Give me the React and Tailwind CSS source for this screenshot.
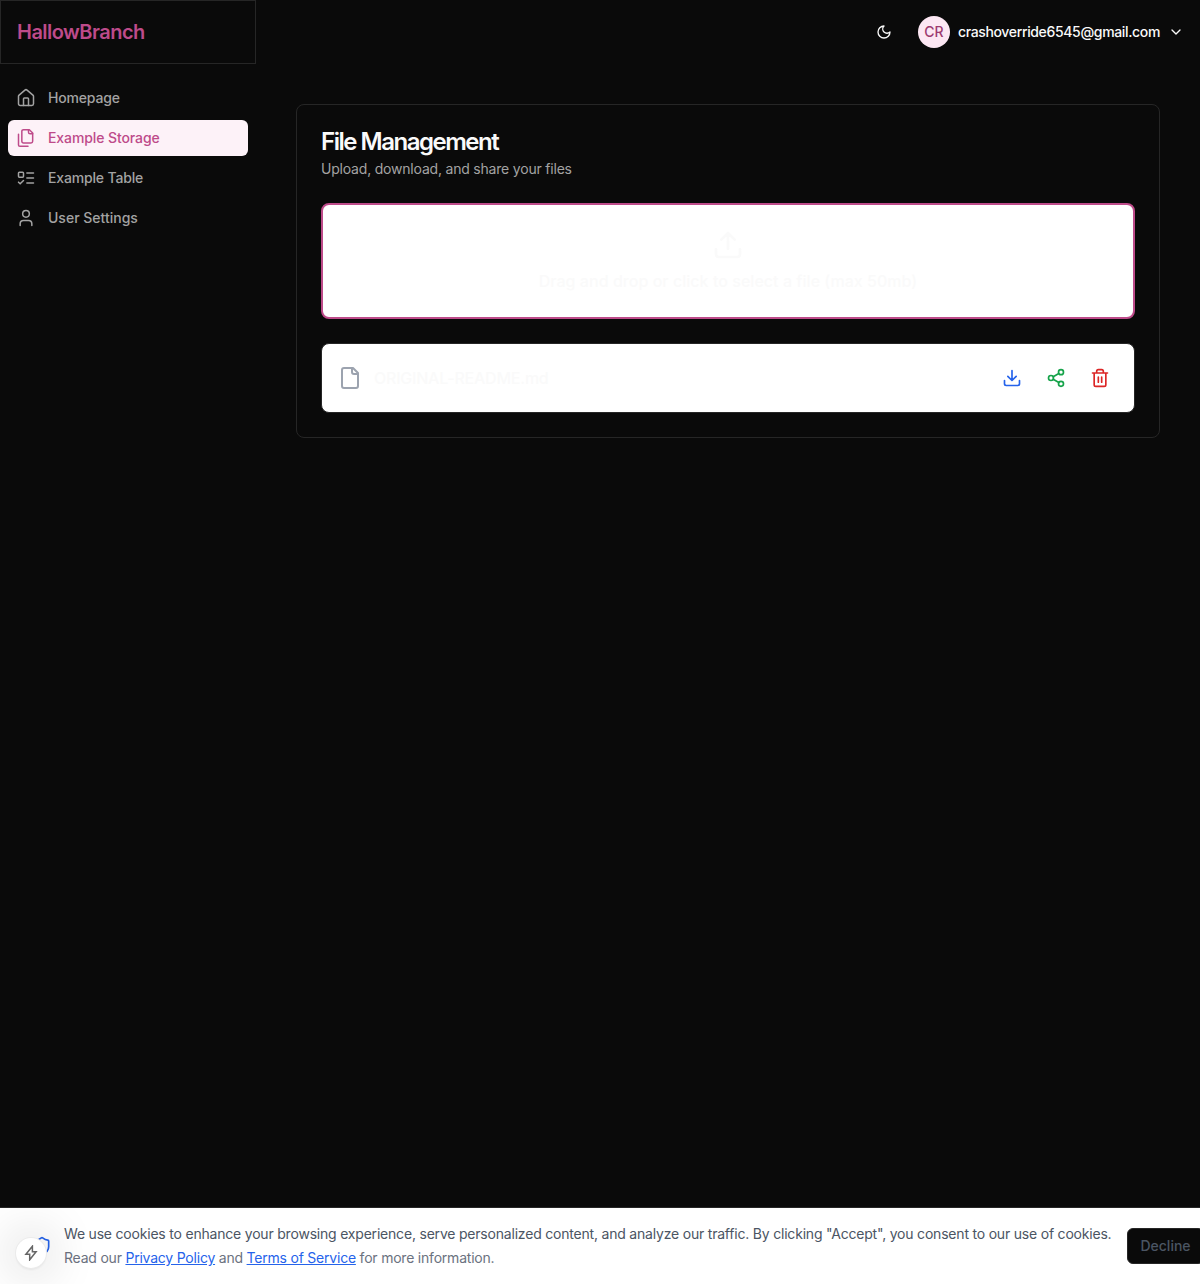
import React from "react";

function Icon({ className, strokeWidth = 2, children }) {
  return (
    <svg
      viewBox="0 0 24 24"
      fill="none"
      stroke="currentColor"
      strokeWidth={strokeWidth}
      strokeLinecap="round"
      strokeLinejoin="round"
      className={className}
    >
      {children}
    </svg>
  );
}

const nav = [
  {
    label: "Homepage",
    tracking: "tracking-[-0.17px]",
    icon: (
      <>
        <path d="M15 21v-8a1 1 0 0 0-1-1h-4a1 1 0 0 0-1 1v8" />
        <path d="M3 10a2 2 0 0 1 .709-1.528l7-5.999a2 2 0 0 1 2.582 0l7 5.999A2 2 0 0 1 21 10v9a2 2 0 0 1-2 2H5a2 2 0 0 1-2-2z" />
      </>
    ),
  },
  {
    label: "Example Storage",
    tracking: "tracking-[-0.1px]",
    active: true,
    icon: (
      <>
        <path d="M20 7h-3a2 2 0 0 1-2-2V2" />
        <path d="M9 18a2 2 0 0 1-2-2V4a2 2 0 0 1 2-2h7l4 4v10a2 2 0 0 1-2 2Z" />
        <path d="M3 7.6v12.8A1.6 1.6 0 0 0 4.6 22h9.8" />
      </>
    ),
  },
  {
    label: "Example Table",
    tracking: "tracking-[-0.16px]",
    icon: (
      <>
        <rect x="3" y="5" width="6" height="6" rx="1" />
        <path d="m3 17 2 2 4-4M13 6h8M13 12h8M13 18h8" />
      </>
    ),
  },
  {
    label: "User Settings",
    tracking: "tracking-normal",
    icon: (
      <>
        <path d="M19 21v-2a4 4 0 0 0-4-4H9a4 4 0 0 0-4 4v2" />
        <circle cx="12" cy="7" r="4" />
      </>
    ),
  },
];

function Sidebar() {
  return (
    <aside className="w-64 shrink-0">
      <div className="flex h-16 items-center border border-[#262626] px-4">
        <span className="text-xl font-semibold tracking-[-0.53px] text-[#be4b8a]">HallowBranch</span>
      </div>
      <nav className="mt-4 flex flex-col gap-1 px-2">
        {nav.map((n) => (
          <a
            key={n.label}
            className={
              n.active
                ? "flex h-9 items-center rounded-md bg-[#fdf2f8] px-2 text-sm font-medium text-[#be4b8a]"
                : "flex h-9 items-center rounded-md px-2 text-sm font-medium text-[#a3a3a3]"
            }
          >
            <Icon className="mr-3 size-5" strokeWidth={1.8}>{n.icon}</Icon>
            <span className={n.tracking}>{n.label}</span>
          </a>
        ))}
      </nav>
    </aside>
  );
}

function Header() {
  return (
    <header className="flex h-16 items-center justify-end pr-4 text-sm font-medium text-neutral-50">
      <Icon className="mr-[26px] size-4">
        <path d="M12 3a6 6 0 0 0 9 9 9 9 0 1 1-9-9Z" />
      </Icon>
      <div className="flex size-8 items-center justify-center rounded-full bg-[#fce7f3] text-[#9d3a70]">CR</div>
      <span className="ml-2 tracking-tight">crashoverride6545@gmail.com</span>
      <Icon className="ml-2 size-4"><path d="m6 9 6 6 6-6" /></Icon>
    </header>
  );
}

function FileCard() {
  return (
    <section className="mx-10 mt-10 rounded-lg border border-[#262626] p-6">
      <h1 className="pt-px text-2xl leading-6 font-semibold tracking-[-1.48px] text-neutral-50">File Management</h1>
      <p className="mt-[5px] text-sm tracking-[-0.2px] text-[#a3a3a3]">Upload, download, and share your files</p>
      <div className="mt-6 flex h-[116px] flex-col items-center justify-center rounded-lg border-2 border-[#be4b8a] bg-white text-neutral-50">
        <Icon className="size-8"><path d="M21 15v4a2 2 0 0 1-2 2H5a2 2 0 0 1-2-2v-4M17 8l-5-5-5 5M12 3v12" /></Icon>
        <span className="mt-2 text-base font-medium tracking-[0.04px]">Drag and drop or click to select a file (max 50mb)</span>
      </div>
      <div className="mt-6 flex h-[70px] items-center rounded-lg border border-[#262626] bg-white pr-6 pl-4">
        <Icon className="size-6 text-[#9ca3af]">
          <path d="M15 2H6a2 2 0 0 0-2 2v16a2 2 0 0 0 2 2h12a2 2 0 0 0 2-2V7Z" />
          <path d="M14 2v4a2 2 0 0 0 2 2h4" />
        </Icon>
        <span className="ml-3 font-medium tracking-[-0.22px] text-neutral-50">ORIGINAL-README.md</span>
        <div className="ml-auto flex gap-6">
          <Icon className="size-5 text-[#2563eb]"><path d="M21 15v4a2 2 0 0 1-2 2H5a2 2 0 0 1-2-2v-4M7 10l5 5 5-5M12 15V3" /></Icon>
          <Icon className="size-5 text-[#16a34a]">
            <circle cx="18" cy="5" r="3" />
            <circle cx="6" cy="12" r="3" />
            <circle cx="18" cy="19" r="3" />
            <path d="m8.59 13.51 6.83 3.98M15.41 6.51l-6.82 3.98" />
          </Icon>
          <Icon className="size-5 text-[#dc2626]">
            <path d="M3 6h18M19 6v14c0 1-1 2-2 2H7c-1 0-2-1-2-2V6M8 6V4c0-1 1-2 2-2h4c1 0 2 1 2 2v2M10 11v6M14 11v6" />
          </Icon>
        </div>
      </div>
    </section>
  );
}

function CookieBar() {
  return (
    <footer className="relative flex h-[77px] shrink-0 items-center border-t border-[#262626] bg-white text-sm whitespace-nowrap">
      <Icon className="ml-8 size-5 shrink-0 text-[#2563eb]">
        <path d="M20 13c0 5-3.5 7.5-7.66 8.95a1 1 0 0 1-.67-.01C7.5 20.5 4 18 4 13V6a1 1 0 0 1 1-1c2 0 4.5-1.2 6.24-2.72a1.17 1.17 0 0 1 1.52 0C14.51 3.81 17 5 19 5a1 1 0 0 1 1 1z" />
      </Icon>
      <div className="ml-3 shrink-0">
        <p className="leading-6 tracking-[-0.202px] text-[#4b5563]">
          We use cookies to enhance your browsing experience, serve personalized content, and analyze our traffic. By clicking "Accept", you consent to our use of cookies.
        </p>
        <p className="leading-6 tracking-[-0.215px] text-[#6b7280]">
          Read our <a className="text-[#2563eb] underline">Privacy Policy</a> and <a className="text-[#2563eb] underline">Terms of Service</a> for more information.
        </p>
      </div>
      <button className="ml-4 h-9 shrink-0 rounded-md border border-[#262626] bg-[#0a0a0a] px-3 font-medium text-[#4b5563]">Decline</button>
      <div className="absolute top-[30px] left-4 flex size-[30px] items-center justify-center rounded-full bg-white text-[#666] shadow-[0_0_0_1px_#ebebeb,0_2px_2px_rgba(0,0,0,0.06),0_0_48px_8px_rgba(0,0,0,0.14)]">
        <svg viewBox="0 0 16 16" fill="none" stroke="currentColor" strokeWidth="1.5" className="size-4">
          <path d="M9.4 1.2 2.9 9.3h3.8v5.5l6.4-8.1H9.4Z" />
        </svg>
      </div>
    </footer>
  );
}

export default function App() {
  return (
    <div className="flex h-screen flex-col overflow-hidden bg-[#0a0a0a] font-[Inter,sans-serif]">
      <div className="flex flex-1">
        <Sidebar />
        <main className="flex-1">
          <Header />
          <FileCard />
        </main>
      </div>
      <div className="overflow-hidden">
        <CookieBar />
      </div>
    </div>
  );
}
